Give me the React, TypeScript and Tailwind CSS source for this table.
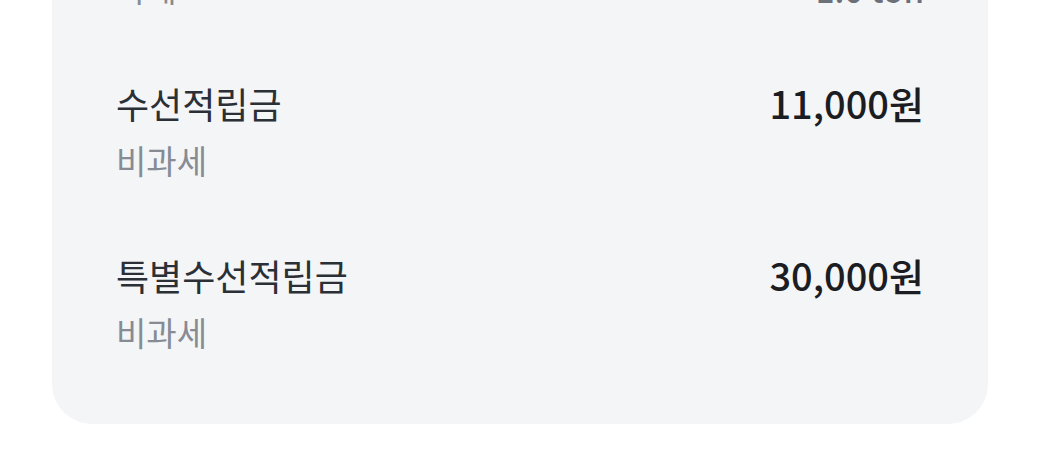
const rows = [
  { title: "적립금", sub: "과세", value: "", note: "1.0 ton" },
  { title: "수선적립금", sub: "비과세", value: "11,000원" },
  { title: "특별수선적립금", sub: "비과세", value: "30,000원" },
];

export default function App() {
  return (
    <div
      className="w-[1040px] h-[457px] overflow-hidden bg-white"
      style={{ fontFamily: '"Noto Sans CJK KR", "Noto Sans", sans-serif' }}
    >
      <div className="mx-[52px] -mt-[93px] rounded-[40px] bg-[#f4f5f7] px-[64px] pb-[69px] flex flex-col gap-[68px]">
        {rows.map((row) => (
          <div key={row.title} className="flex justify-between items-start">
            <div className="flex flex-col">
              <span className="text-[36px] leading-[48px] font-normal text-[#2b2f36]">
                {row.title}
              </span>
              <span className="mt-[10px] text-[33px] leading-[46px] text-[#868b94]">
                {row.sub}
              </span>
            </div>
            <div className="flex flex-col items-end">
              <span className="h-[48px] text-[38px] leading-[48px] font-medium text-[#1b1d22]">
                {row.value}
              </span>
              {row.note && (
                <span className="mt-[12px] text-[33px] leading-[44px] font-medium text-[#6b7079]">
                  {row.note}
                </span>
              )}
            </div>
          </div>
        ))}
      </div>
    </div>
  );
}
